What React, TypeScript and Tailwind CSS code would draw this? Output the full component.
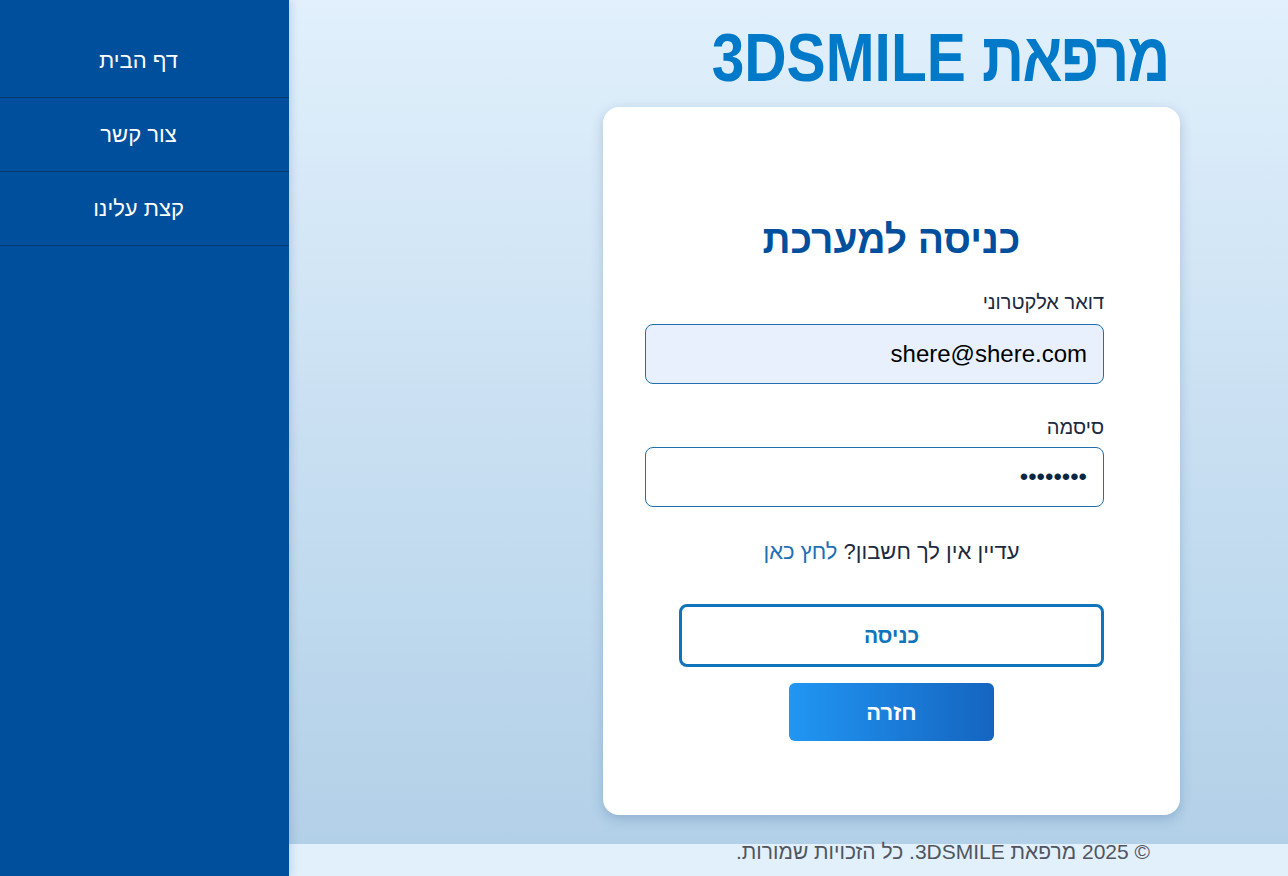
import { useState } from 'react';

const navItems = ['דף הבית', 'צור קשר', 'קצת עלינו'];

export default function App() {
  const [email, setEmail] = useState('shere@shere.com');
  const [password, setPassword] = useState('12345678');

  return (
    <div
      className="flex h-[876px] w-full overflow-hidden"
      style={{ fontFamily: '"Liberation Sans", Arial, sans-serif' }}
    >
      {/* Sidebar */}
      <aside dir="rtl" className="w-[289px] shrink-0 bg-[#004f9d] pt-6 shadow-[2px_0_8px_rgba(0,40,90,0.15)] z-10">
        {navItems.map((item) => (
          <a
            key={item}
            href="#"
            className="flex h-[74px] items-center justify-center border-b border-[#003a73] pr-3 text-[22px] text-white"
          >
            {item}
          </a>
        ))}
      </aside>

      {/* Main */}
      <div className="flex flex-1 flex-col">
        <main
          dir="rtl"
          className="flex flex-1 flex-col items-start bg-gradient-to-b from-[#e1f0fc] to-[#b2d0e8] pr-[108px] pt-[17px]"
        >
          <h1 className="mr-[11px] origin-right scale-x-[0.85] whitespace-nowrap text-[69px] font-bold leading-[82px] text-[#0079c9]">
            <span className="tracking-[-2px]">מרפאת</span> 3DSMILE
          </h1>

          <div className="mt-2 w-[577px] rounded-2xl bg-white px-[76px] pb-[74px] pt-[110px] shadow-[0_4px_12px_rgba(40,80,130,0.25)]">
            <h2 className="text-center text-[39px] font-bold leading-[46px] text-[#004f9d]">כניסה למערכת</h2>

            <form className="mt-[27px]" onSubmit={(e) => e.preventDefault()}>
              <label className="block text-[20px] leading-[24px] text-[#1b2a40]">דואר אלקטרוני</label>
              <input
                type="email"
                value={email}
                onChange={(e) => setEmail(e.target.value)}
                className="mt-[10px] box-content block h-[58px] w-full rounded-lg border border-[#1f6fae] bg-[#e8f0fe] px-4 text-[24px] text-black outline-none"
              />

              <label className="mt-[31px] block text-[20px] leading-[24px] text-[#1b2a40]">סיסמה</label>
              <input
                type="password"
                value={password}
                onChange={(e) => setPassword(e.target.value)}
                className="mt-[8px] box-content block h-[58px] w-full rounded-lg border border-[#1f6fae] bg-white px-4 text-[24px] text-[#0b2545] outline-none"
              />

              <p className="mt-[31px] text-center text-[22px] leading-[28px] text-[#1b2a40]">
                עדיין אין לך חשבון? <a href="#" className="text-[#1f6fb5]">לחץ כאן</a>
              </p>

              <button
                type="submit"
                className="mt-[38px] block h-[63px] w-full rounded-lg border-[3px] border-[#0f74bb] bg-white text-[21px] font-bold text-[#0f74bb]"
              >
                כניסה
              </button>

              <button
                type="button"
                className="mx-auto mt-4 block h-[58px] w-[205px] rounded-md bg-gradient-to-r from-[#2196f3] to-[#1565c0] text-[22px] font-bold text-white"
              >
                חזרה
              </button>
            </form>
          </div>
        </main>

        <footer dir="rtl" className="h-8 shrink-0 bg-[#e2f0fc] pr-[138px] text-[21px] leading-[16px] text-[#505560]">
          © 2025 מרפאת 3DSMILE. כל הזכויות שמורות.
        </footer>
      </div>
    </div>
  );
}
